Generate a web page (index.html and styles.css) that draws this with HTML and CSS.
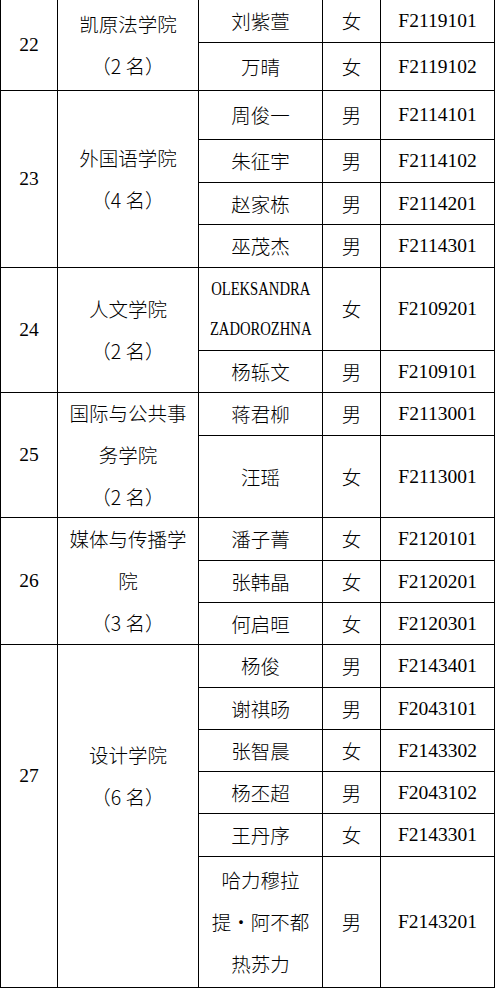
FILE: index.html
```html
<!DOCTYPE html>
<html lang="zh-CN">
<head>
<meta charset="utf-8">
<link rel="stylesheet" href="styles.css">
</head>
<body>
<div class="roster">
  <div class="cell num span2">22</div>
  <div class="cell college span2"><p>凯原法学院<br>（2 名）</p></div>
  <div class="cell cn">刘紫萱</div><div class="cell cn">女</div><div class="cell code">F2119101</div>
  <div class="cell cn">万晴</div><div class="cell cn">女</div><div class="cell code">F2119102</div>

  <div class="cell num span4">23</div>
  <div class="cell college span4"><p>外国语学院<br>（4 名）</p></div>
  <div class="cell cn">周俊一</div><div class="cell cn">男</div><div class="cell code">F2114101</div>
  <div class="cell cn">朱征宇</div><div class="cell cn">男</div><div class="cell code">F2114102</div>
  <div class="cell cn">赵家栋</div><div class="cell cn">男</div><div class="cell code">F2114201</div>
  <div class="cell cn">巫茂杰</div><div class="cell cn">男</div><div class="cell code">F2114301</div>

  <div class="cell num span2">24</div>
  <div class="cell college span2"><p>人文学院<br>（2 名）</p></div>
  <div class="cell latin"><p class="narrow">OLEKSANDRA<br>ZADOROZHNA</p></div><div class="cell cn">女</div><div class="cell code">F2109201</div>
  <div class="cell cn">杨轹文</div><div class="cell cn">男</div><div class="cell code">F2109101</div>

  <div class="cell num span2">25</div>
  <div class="cell college span2"><p>国际与公共事<br>务学院<br>（2 名）</p></div>
  <div class="cell cn">蒋君柳</div><div class="cell cn">男</div><div class="cell code">F2113001</div>
  <div class="cell cn">汪瑶</div><div class="cell cn">女</div><div class="cell code">F2113001</div>

  <div class="cell num span3">26</div>
  <div class="cell college span3"><p>媒体与传播学<br>院<br>（3 名）</p></div>
  <div class="cell cn">潘子菁</div><div class="cell cn">女</div><div class="cell code">F2120101</div>
  <div class="cell cn">张韩晶</div><div class="cell cn">女</div><div class="cell code">F2120201</div>
  <div class="cell cn">何启晅</div><div class="cell cn">女</div><div class="cell code">F2120301</div>

  <div class="cell num span6 raised">27</div>
  <div class="cell college span6 raised"><p>设计学院<br>（6 名）</p></div>
  <div class="cell cn">杨俊</div><div class="cell cn">男</div><div class="cell code">F2143401</div>
  <div class="cell cn">谢祺旸</div><div class="cell cn">男</div><div class="cell code">F2043101</div>
  <div class="cell cn">张智晨</div><div class="cell cn">女</div><div class="cell code">F2143302</div>
  <div class="cell cn">杨丕超</div><div class="cell cn">男</div><div class="cell code">F2043102</div>
  <div class="cell cn">王丹序</div><div class="cell cn">女</div><div class="cell code">F2143301</div>
  <div class="cell cn"><p>哈力穆拉<br>提・阿不都<br>热苏力</p></div><div class="cell cn">男</div><div class="cell code">F2143201</div>
</div>
</body>
</html>
```
FILE: styles.css
```css
html, body {
  margin: 0;
  padding: 0;
  background: #ffffff;
}

body {
  overflow: hidden;
  font-family: "Liberation Serif", "Noto Sans CJK SC", serif;
  font-size: 19.5px;
  color: #000000;
}

.roster {
  display: grid;
  grid-template-columns: 57px 141px 124px 58px 114px;
  grid-template-rows: 43px 48px 49px 43px 42px 43px 83px 42px 43px 82px 43px 42px 42px 43px 42px 42px 42px 43px 131px;
  width: 495px;
  box-sizing: border-box;
  border-left: 1px solid #000000;
}

.cell {
  box-sizing: border-box;
  border-right: 1px solid #000000;
  border-bottom: 1px solid #000000;
  display: flex;
  align-items: center;
  justify-content: center;
  text-align: center;
  white-space: nowrap;
  line-height: 24px;
  overflow: hidden;
}

.cell p {
  margin: 0;
}

.span2 { grid-row: span 2; }
.span3 { grid-row: span 3; }
.span4 { grid-row: span 4; }
.span6 { grid-row: span 6; }

.cn, .college {
  font-family: "Noto Sans CJK SC", sans-serif;
  font-weight: 300;
}

.college p,
.cn p {
  line-height: 42px;
}

.raised {
  padding-bottom: 80px;
}

.num, .code {
  font-family: "Liberation Serif", serif;
}

.latin p {
  line-height: 40px;
}

.narrow {
  transform: scaleX(0.75);
}
```
